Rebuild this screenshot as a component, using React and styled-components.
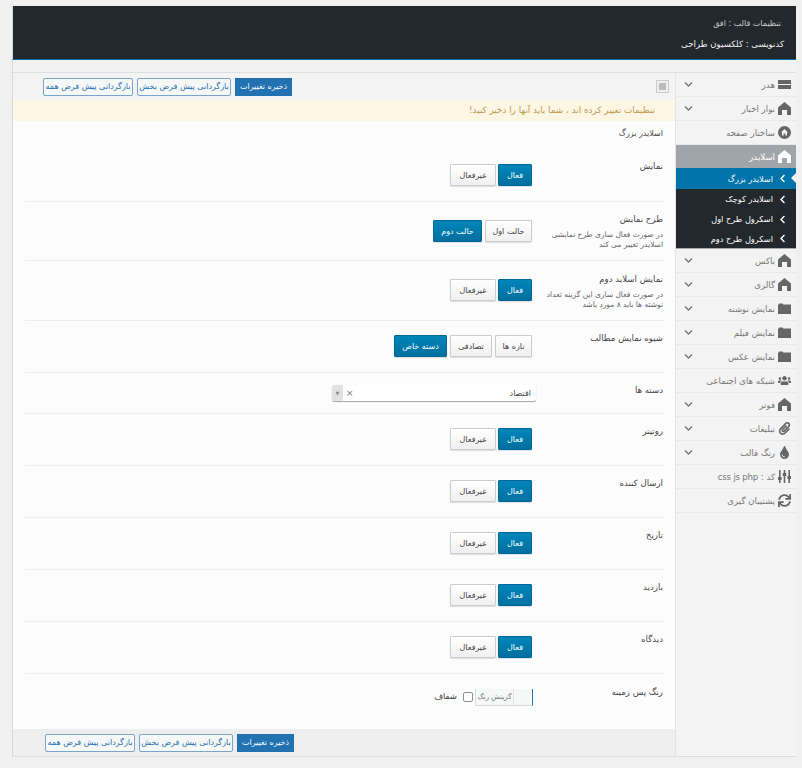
import React from "react";
import styled, { createGlobalStyle } from "styled-components";
import { FaUsers, FaPaperclip, FaTint, FaSync, FaChevronLeft, FaChevronDown } from "react-icons/fa";

const Global = createGlobalStyle`
  html, body { margin: 0; padding: 0; background: #f0f0f0; }
  body { font-family: "DejaVu Sans", sans-serif; color: #333; }
  * { box-sizing: border-box; }
`;

const Page = styled.div`
  width: 802px;
  height: 768px;
  padding: 6px 6px 0 12px;
  direction: rtl;
  overflow: hidden;
`;

const Header = styled.header`
  height: 54px;
  background: #23282d;
  border-left: 1px solid #d8d8d8;
  border-bottom: 1px solid #0073aa;
  padding: 11px 12px 0;
  color: #fff;
`;

const ThemeName = styled.div`
  height: 20px;
  line-height: 14px;
  padding-right: 3px;
  font-size: 8px;
  letter-spacing: -0.4px;
  color: #c9cbcd;
`;

const Credit = styled.div`
  line-height: 14px;
  font-size: 8.6px;
  letter-spacing: -0.3px;
  color: #f2f2f2;
`;

const Gap = styled.div`
  height: 12px;
  background: #f2f2f2;
  border-left: 1px solid #d8d8d8;
`;

const Panel = styled.div`
  display: flex;
  height: 685px;
  border-top: 1px solid #dfdfdf;
  border-left: 1px solid #d8d8d8;
  border-bottom: 1px solid #dcdcdc;
`;

const Sidebar = styled.nav`
  width: 121px;
  flex: none;
  background: #f3f3f3;
  border-left: 1px solid #e4e4e4;
`;

const NavItem = styled.div`
  display: flex;
  align-items: center;
  height: 24px;
  padding: 0 4px;
  border-bottom: 1px solid #e9e9e9;
  color: #777;
  font-size: 8.6px;
  letter-spacing: -0.22px;
  white-space: nowrap;
`;

const ActiveItem = styled(NavItem)`
  height: 23px;
  background: #a0a5aa;
  color: #fff;
  border: 0;
`;

const NavIcon = styled.span`
  display: flex;
  justify-content: center;
  align-items: center;
  flex: none;
  width: 16px;
  margin-left: 1px;
  font-size: 13px;
  color: ${(p) => (p.$light ? "#fff" : "#666")};
`;

const Caret = styled.span`
  display: flex;
  margin-right: auto;
  padding-left: 4px;
  font-size: 9px;
  color: #777;
`;

const SubList = styled.div`
  background: #23282d;
  border-bottom: 1px solid #aaa;
`;

const SubItem = styled.div`
  position: relative;
  display: flex;
  align-items: center;
  height: ${(p) => (p.$on ? "21px" : "20px")};
  padding-right: 9px;
  background: ${(p) => (p.$on ? "#0073aa" : "transparent")};
  color: #fff;
  font-size: 8.2px;
  letter-spacing: -0.3px;
  white-space: nowrap;
  &:last-child { height: 19px; }
  svg { font-size: 9px; margin-left: 5px; flex: none; }
  ${(p) =>
    p.$on &&
    `&::after {
      content: "";
      position: absolute;
      right: 0;
      top: 5px;
      border: 5px solid transparent;
      border-right-color: #f1f1f1;
    }`}
`;

const Main = styled.main`
  flex: 1;
  display: flex;
  flex-direction: column;
  background: #fcfcfc;
`;

const Toolbar = styled.div`
  display: flex;
  align-items: center;
  height: 27px;
  padding: ${(p) => (p.$bottom ? "0 381px 0 0" : "0 6px 0 0")};
  background: ${(p) => (p.$bottom ? "#eeeeee" : "#f3f3f3")};
  gap: 4px;
`;

const ExpandIcon = styled.span`
  display: block;
  width: 13px;
  height: 13px;
  margin-left: 360px;
  background: #bbb;
  border: 1px solid #ccc;
  box-shadow: inset 0 0 0 2px #eee;
`;

const SaveButton = styled.button`
  height: 18px;
  width: ${(p) => p.$w}px;
  padding: 0;
  border: 1px solid #2271b1;
  background: #2271b1;
  color: #fff;
  font: 8px "DejaVu Sans", sans-serif;
  letter-spacing: -0.15px;
  white-space: nowrap;
`;

const ResetButton = styled(SaveButton)`
  background: #f6f7f7;
  color: #2271b1;
  border-color: #7aa5cc;
  border-radius: 2px;
`;

const Notice = styled.div`
  height: 21px;
  padding-right: 20px;
  line-height: 21px;
  background: #fcf6e3;
  color: #c09853;
  font-size: 8.8px;
  letter-spacing: -0.1px;
`;

const Body = styled.div`
  flex: 1;
  padding: 0 11px 0 12px;
`;

const SectionTitle = styled.div`
  height: 28px;
  padding: 8px 1px 0 0;
  font-size: 8px;
  letter-spacing: -0.33px;
  color: #444;
`;

const Row = styled.div`
  display: grid;
  grid-template-columns: 132px 1fr;
  height: ${(p) => p.$h}px;
  border-bottom: ${(p) => (p.$last ? "0" : "1px solid #eee")};
`;

const Label = styled.div`
  padding-top: ${(p) => p.$top}px;
  padding-right: 1px;
`;

const LabelText = styled.div`
  font-size: 8.6px;
  letter-spacing: -0.3px;
  line-height: 13px;
  color: #444;
`;

const Hint = styled.div`
  margin-top: 4px;
  padding-left: 14px;
  font-size: 7.5px;
  letter-spacing: -0.15px;
  line-height: 10px;
  color: #666;
`;

const Controls = styled.div`
  display: flex;
  align-items: flex-start;
  gap: ${(p) => p.$gap || 2}px;
  padding-top: ${(p) => p.$top}px;
`;

const Toggle = styled.button`
  height: 22px;
  width: ${(p) => p.$w}px;
  padding: 0;
  border: 1px solid ${(p) => (p.$on ? "#006799" : "#ccc")};
  border-radius: 1px;
  background: ${(p) => (p.$on ? "linear-gradient(#0085ba, #006f9f)" : "linear-gradient(#fff, #f0f0f0)")};
  box-shadow: 0 1px 1px rgba(0, 0, 0, 0.12);
  color: ${(p) => (p.$on ? "#fff" : "#444")};
  font: 8px "DejaVu Sans", sans-serif;
  letter-spacing: -0.2px;
  white-space: nowrap;
`;

const Select = styled.div`
  display: flex;
  align-items: center;
  width: 204px;
  height: 16px;
  margin-right: -4px;
  padding-right: 5px;
  border-radius: 2px;
  background: #fff;
  box-shadow: 0 1px 1px rgba(0, 0, 0, 0.35);
  font-size: 8px;
  color: #444;
`;

const ClearMark = styled.span`
  margin-right: auto;
  margin-left: 3px;
  color: #777;
  font-size: 9px;
`;

const SelectArrow = styled.span`
  display: flex;
  align-items: center;
  justify-content: center;
  width: 11px;
  height: 16px;
  background: #e2e2e2;
  border-radius: 2px 0 0 2px;
  color: #888;
  font-size: 5px;
`;

const ColorField = styled.div`
  display: flex;
  width: 58px;
  height: 17px;
  margin-right: -1px;
  background: #f6f7f7;
  border: 1px solid #d5dde3;
  border-top: 0;
  border-right: 1px solid #2271b1;
`;

const ColorSwatch = styled.span`
  width: 19px;
  border-left: 1px solid #e3e3e3;
`;

const ColorText = styled.span`
  flex: 1;
  text-align: center;
  font-size: 7px;
  letter-spacing: -0.2px;
  line-height: 17px;
  color: #777;
`;

const Check = styled.input`
  width: 10px;
  height: 10px;
  margin: 3px 0 0;
  appearance: none;
  background: #fff;
  border: 1px solid #8c8f94;
  border-radius: 2px;
`;

const CheckLabel = styled.span`
  margin: 2px 4px 0 0;
  font-size: 8.5px;
  color: #444;
`;

const HeaderIcon = () => (
  <svg width="13" height="9" viewBox="0 0 13 9" fill="currentColor">
    <rect width="13" height="4" />
    <rect y="5" width="13" height="4" />
  </svg>
);

const HouseIcon = () => (
  <svg width="13" height="13" viewBox="0 0 13 13" fill="currentColor">
    <path d="M6.5 0 L13 5.5 V13 H9 V8 H4 V13 H0 V5.5 Z" />
  </svg>
);

const PageIcon = () => (
  <svg width="13" height="13" viewBox="0 0 13 13">
    <circle cx="6.5" cy="6.5" r="6.5" fill="currentColor" />
    <path d="M6.5 3 L10 6.4 H9 V9.6 H7.3 V7.6 H5.7 V9.6 H4 V6.4 H3 Z" fill="#f3f3f3" />
  </svg>
);

const FolderIcon = () => (
  <svg width="13" height="11" viewBox="0 0 13 11" fill="currentColor">
    <path d="M0 1.5 H1 V0.5 H5 V1.5 H13 V11 H0 Z" />
  </svg>
);

const SlidersIcon = () => (
  <svg width="13" height="13" viewBox="0 0 13 13" fill="currentColor">
    <rect x="1" width="1.6" height="13" />
    <rect x="5.7" width="1.6" height="13" />
    <rect x="10.4" width="1.6" height="13" />
    <rect y="7" width="3.6" height="3" />
    <rect x="4.7" y="3" width="3.6" height="3" />
    <rect x="9.4" y="6" width="3.6" height="3" />
  </svg>
);

const navTop = [
  { text: "هدر", icon: <HeaderIcon />, caret: true },
  { text: "نوار اخبار", icon: <HouseIcon />, caret: true },
  { text: "ساختار صفحه", icon: <PageIcon /> },
];

const subItems = ["اسلایدر بزرگ", "اسلایدر کوچک", "اسکرول طرح اول", "اسکرول طرح دوم"];

const navBottom = [
  { text: "باکس", icon: <HouseIcon />, caret: true },
  { text: "گالری", icon: <HouseIcon />, caret: true },
  { text: "نمایش نوشته", icon: <FolderIcon />, caret: true },
  { text: "نمایش فیلم", icon: <FolderIcon />, caret: true },
  { text: "نمایش عکس", icon: <FolderIcon />, caret: true },
  { text: "شبکه های اجتماعی", icon: <FaUsers /> },
  { text: "فوتر", icon: <HouseIcon />, caret: true },
  { text: "تبلیغات", icon: <FaPaperclip />, caret: true },
  { text: "رنگ قالب", icon: <FaTint />, caret: true },
  { text: "کد : css js php", icon: <SlidersIcon /> },
  { text: "پشتیبان گیری", icon: <FaSync /> },
];

const NavRow = ({ item }) => (
  <NavItem>
    <NavIcon>{item.icon}</NavIcon>
    {item.text}
    {item.caret && (
      <Caret>
        <FaChevronDown />
      </Caret>
    )}
  </NavItem>
);

const OnOff = () => (
  <>
    <Toggle $on $w={34}>فعال</Toggle>
    <Toggle $w={46}>غیرفعال</Toggle>
  </>
);

const simpleRows = ["روتیتر", "ارسال کننده", "تاریخ", "بازدید", "دیدگاه"];

const Buttons = () => (
  <>
    <SaveButton $w={57}>ذخیره تغییرات</SaveButton>
    <ResetButton $w={94}>بازگردانی پیش فرض بخش</ResetButton>
    <ResetButton $w={90}>بازگردانی پیش فرض همه</ResetButton>
  </>
);

export default function App() {
  return (
    <Page>
      <Global />
      <Header>
        <ThemeName>تنظیمات قالب : افق</ThemeName>
        <Credit>کدنویسی : کلکسیون طراحی</Credit>
      </Header>
      <Gap />
      <Panel>
        <Sidebar>
          {navTop.map((item) => (
            <NavRow key={item.text} item={item} />
          ))}
          <ActiveItem>
            <NavIcon $light>
              <HouseIcon />
            </NavIcon>
            اسلایدر
          </ActiveItem>
          <SubList>
            {subItems.map((text, i) => (
              <SubItem key={text} $on={i === 0}>
                <FaChevronLeft />
                {text}
              </SubItem>
            ))}
          </SubList>
          {navBottom.map((item) => (
            <NavRow key={item.text} item={item} />
          ))}
        </Sidebar>
        <Main>
          <Toolbar>
            <ExpandIcon />
            <Buttons />
          </Toolbar>
          <Notice>تنظیمات تغییر کرده اند ، شما باید آنها را ذخیر کنید!</Notice>
          <Body>
            <SectionTitle>اسلایدر بزرگ</SectionTitle>
            <Row $h={53}>
              <Label $top={11}>
                <LabelText>نمایش</LabelText>
              </Label>
              <Controls $top={15}>
                <OnOff />
              </Controls>
            </Row>
            <Row $h={59}>
              <Label $top={11}>
                <LabelText>طرح نمایش</LabelText>
                <Hint>در صورت فعال سازی طرح نمایشی اسلایدر تغییر می کند</Hint>
              </Label>
              <Controls $top={18} $gap={3}>
                <Toggle $w={47}>حالت اول</Toggle>
                <Toggle $on $w={49}>حالت دوم</Toggle>
              </Controls>
            </Row>
            <Row $h={60}>
              <Label $top={12}>
                <LabelText>نمایش اسلاید دوم</LabelText>
                <Hint>در صورت فعال سازی این گزینه تعداد نوشته ها باید ۸ مورد باشد</Hint>
              </Label>
              <Controls $top={18}>
                <OnOff />
              </Controls>
            </Row>
            <Row $h={52}>
              <Label $top={11}>
                <LabelText>شیوه نمایش مطالب</LabelText>
              </Label>
              <Controls $top={14} $gap={3}>
                <Toggle $w={37}>تازه ها</Toggle>
                <Toggle $w={42}>تصادفی</Toggle>
                <Toggle $on $w={53}>دسته خاص</Toggle>
              </Controls>
            </Row>
            <Row $h={41}>
              <Label $top={11}>
                <LabelText>دسته ها</LabelText>
              </Label>
              <Controls $top={12}>
                <Select>
                  اقتصاد
                  <ClearMark>×</ClearMark>
                  <SelectArrow>▼</SelectArrow>
                </Select>
              </Controls>
            </Row>
            {simpleRows.map((text) => (
              <Row key={text} $h={52}>
                <Label $top={11}>
                  <LabelText>{text}</LabelText>
                </Label>
                <Controls $top={14}>
                  <OnOff />
                </Controls>
              </Row>
            ))}
            <Row $h={55} $last>
              <Label $top={12}>
                <LabelText>رنگ پس زمینه</LabelText>
              </Label>
              <Controls $top={15}>
                <ColorField>
                  <ColorSwatch />
                  <ColorText>گزینش رنگ</ColorText>
                </ColorField>
                <Check type="checkbox" />
                <CheckLabel>شفاف</CheckLabel>
              </Controls>
            </Row>
          </Body>
          <Toolbar $bottom>
            <Buttons />
          </Toolbar>
        </Main>
      </Panel>
    </Page>
  );
}
